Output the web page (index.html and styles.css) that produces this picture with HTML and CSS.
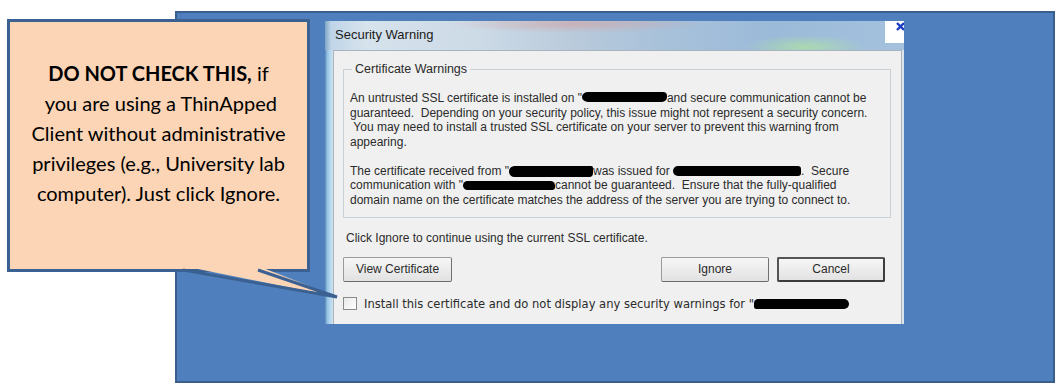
FILE: index.html
```html
<!DOCTYPE html>
<html>
<head>
<meta charset="utf-8">
<link rel="stylesheet" href="styles.css">
</head>
<body>
<div class="panel">
  <div class="dialog">
    <div class="titlebar">
      <span class="title">Security Warning</span>
      <span class="close"><svg width="19" height="22" viewBox="0 0 19 22"><path d="M12 2 L19 9 M19 2 L12 9" stroke="#1c3cc4" stroke-width="2.4" fill="none"/></svg></span>
    </div>
    <div class="frame">
      <div class="frame-left"></div>
      <div class="content">
        <fieldset class="group">
          <legend class="legend">Certificate Warnings</legend>
          <p class="para">
            <span class="ln">An untrusted SSL certificate is installed on "<span class="blob b1"></span>and secure communication cannot be</span>
            <span class="ln">guaranteed.&nbsp; Depending on your security policy, this issue might not represent a security concern.</span>
            <span class="ln">&nbsp;You may need to install a trusted SSL certificate on your server to prevent this warning from</span>
            <span class="ln">appearing.</span>
          </p>
          <p class="para para2">
            <span class="ln">The certificate received from "<span class="blob b2"></span>was issued for <span class="blob b3"></span>.&nbsp; Secure</span>
            <span class="ln">communication with "<span class="blob b4"></span>cannot be guaranteed.&nbsp; Ensure that the fully-qualified</span>
            <span class="ln">domain name on the certificate matches the address of the server you are trying to connect to.</span>
          </p>
        </fieldset>
        <p class="hint">Click Ignore to continue using the current SSL certificate.</p>
        <div class="buttons">
          <span class="btn">View Certificate</span>
          <span class="btn btn-ignore">Ignore</span>
          <span class="btn btn-default">Cancel</span>
        </div>
        <div class="check-row">
          <span class="checkbox"></span>
          <span class="check-label">Install this certificate and do not display any security warnings for "<span class="blob b5"></span></span>
        </div>
      </div>
      <div class="frame-right"></div>
    </div>
  </div>
</div>

<div class="callout">
  <p class="callout-text"><b>DO NOT CHECK THIS,</b> if<br>&nbsp;you are using a ThinApped<br>Client without administrative<br>privileges (e.g., University lab<br>computer). Just click Ignore.</p>
</div>
<svg class="tail" width="200" height="50" viewBox="150 260 200 50">
  <polygon points="183,266 337,297 258,266" fill="#fbd5b5"/>
  <polyline points="183,270 337,297 258,270" fill="none" stroke="#3b6192" stroke-width="3" stroke-linejoin="miter"/>
</svg>
</body>
</html>
```

FILE: styles.css
```css
html, body {
  margin: 0;
  padding: 0;
}
body {
  width: 1062px;
  height: 390px;
  background: #ffffff;
  position: relative;
  overflow: hidden;
}
.panel {
  box-sizing: border-box;
  margin: 11px 0 0 175px;
  width: 880px;
  height: 372px;
  border: 2px solid #3a5f8e;
  background: #4f80bd;
  padding: 8px 0 0 148px;
}
.dialog {
  width: 579px;
  height: 303px;
  display: flex;
  flex-direction: column;
  overflow: hidden;
  font-family: "Liberation Sans", Arial, sans-serif;
  color: #2b2b2b;
}
.titlebar {
  height: 29px;
  flex: none;
  display: flex;
  align-items: flex-start;
  background:
    radial-gradient(ellipse 60px 12px at 480px 26px, rgba(175,225,165,0.8), rgba(175,225,165,0) 100%),
    radial-gradient(ellipse 130px 9px at 250px 3px, rgba(210,160,160,0.6), rgba(210,160,160,0) 100%),
    linear-gradient(to right, #7fa6c8 0px, #bfd5e8 6px, #d6e2ec 40px, #cddbe7 150px, #b9cadb 250px, #a9c2da 330px, #9bbad9 450px, #a3c1dd 560px);
}
.title {
  padding: 7px 0 0 10px;
  font-family: "Liberation Sans", Arial, sans-serif;
  font-size: 13px;
  line-height: 14px;
  color: #1a1a1a;
}
.close {
  margin-left: auto;
  width: 19px;
  height: 22px;
  background: #ffffff;
  display: block;
  overflow: hidden;
}
.close svg {
  display: block;
}
.frame {
  flex: 1;
  display: flex;
}
.frame-left {
  width: 8px;
  flex: none;
  background: linear-gradient(to right, #5d86ad 0px, #8fc0e4 2px, #b3d6ef 5px, #cfe2ef 8px);
}
.frame-right {
  width: 2px;
  flex: none;
  background: #dce5ee;
}
.content {
  flex: 1;
  background: #f0f0f0;
  border: 1px solid #a9b3bd;
  border-bottom: none;
  font-size: 12px;
  line-height: 14.5px;
}
.group {
  margin: 11px 0 0 9px;
  width: 548px;
  box-sizing: border-box;
  border: 1px solid #c9d0d6;
  padding: 15px 6px 10px 6px;
  min-width: 0;
}
.legend {
  margin-left: 2px;
  padding: 0 3px;
  font-size: 12.5px;
  line-height: 14px;
}
.para {
  margin: 0;
}
.para2 {
  margin-top: 14.5px;
}
.ln {
  display: block;
  white-space: nowrap;
}
.blob {
  display: inline-block;
  background: #000;
  vertical-align: middle;
  border-radius: 6px 4px 5px 6px / 5px 4px 5px 5px;
}
.b1 { width: 85px; height: 10px; margin-top: -3px; }
.b2 { width: 84px; height: 11px; border-radius: 6px 2px 4px 6px; }
.b3 { width: 128px; height: 10px; border-radius: 5px 3px 3px 5px; }
.b4 { width: 92px; height: 9px; border-radius: 5px 5px 3px 5px; }
.b5 { width: 95px; height: 10px; border-radius: 5px 6px 6px 3px; }
.hint {
  margin: 13px 0 0 12px;
  white-space: nowrap;
}
.buttons {
  margin-top: 11px;
  display: flex;
  padding: 0 16px 0 9px;
}
.btn {
  box-sizing: border-box;
  width: 109px;
  height: 25px;
  display: flex;
  align-items: center;
  justify-content: center;
  border: 1px solid #9a9a9a;
  border-right-color: #707070;
  border-bottom-color: #6a6a6a;
  border-radius: 2px;
  background: linear-gradient(to bottom, #f6f6f6 0%, #ececec 50%, #e2e2e2 100%);
  font-size: 12px;
  color: #2b2b2b;
}
.btn-ignore {
  margin-left: auto;
  width: 108px;
}
.btn-default {
  margin-left: 8px;
  width: 108px;
  border: 2px solid #3c3c3c;
  border-top-color: #555;
  border-left-color: #555;
}
.check-row {
  margin: 15px 0 0 9px;
  display: flex;
  align-items: center;
  gap: 7px;
}
.checkbox {
  box-sizing: border-box;
  width: 14px;
  height: 13px;
  border: 1px solid #8a8a8a;
  background: linear-gradient(135deg, #e9e9e9, #ffffff);
  flex: none;
}
.check-label {
  font-family: "DejaVu Sans Condensed", "DejaVu Sans", sans-serif;
  font-size: 12.8px;
  white-space: nowrap;
}
.callout {
  position: absolute;
  left: 7px;
  top: 19px;
  width: 303px;
  height: 253px;
  box-sizing: border-box;
  border: 3px solid #3b6192;
  background: #fbd5b5;
}
.callout-text {
  margin: 0;
  padding-top: 36px;
  text-align: center;
  font-family: Lato, "Open Sans", sans-serif;
  font-size: 20px;
  line-height: 30px;
  color: #000;
}
.callout-text b {
  font-weight: 700;
}
.tail {
  position: absolute;
  left: 150px;
  top: 260px;
}
```
